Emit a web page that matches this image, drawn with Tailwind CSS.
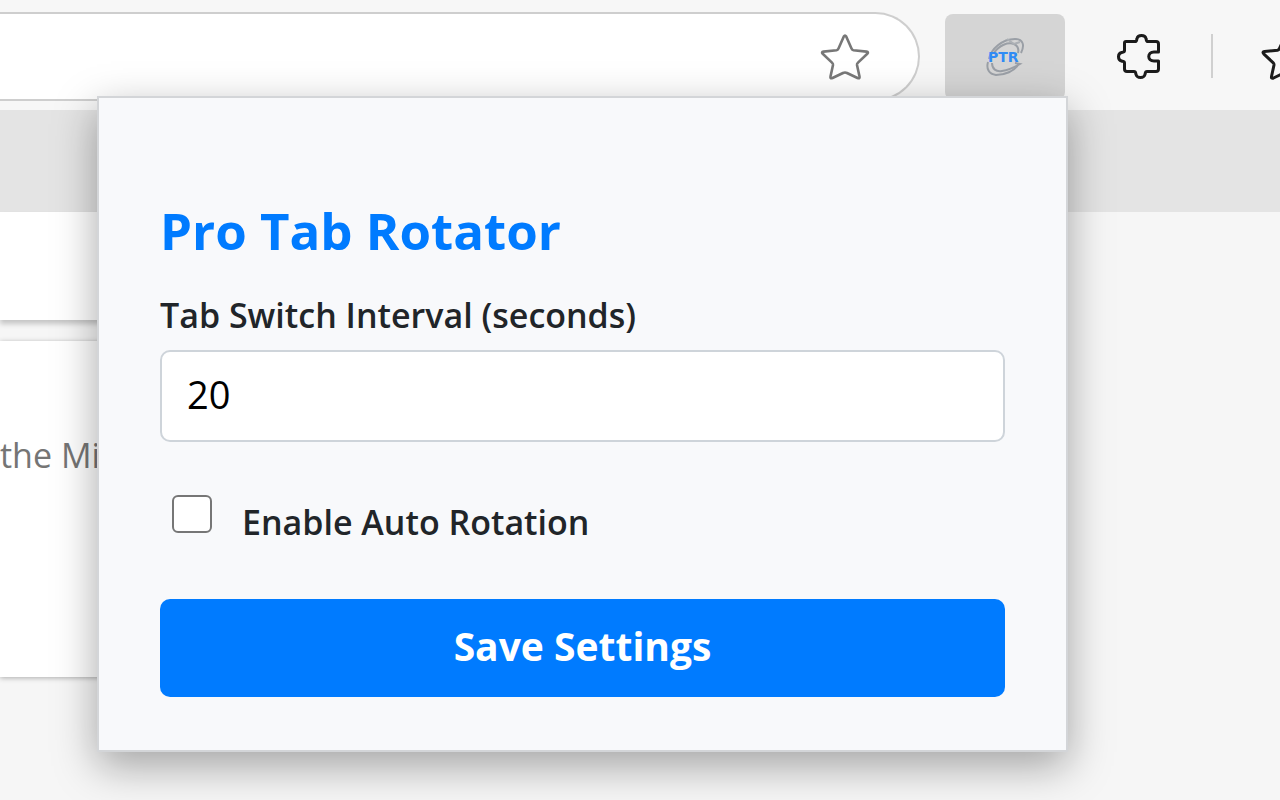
<!DOCTYPE html>
<html lang="en">
<head>
  <meta charset="UTF-8">
  <title>Pro Tab Rotator</title>
  <script src="https://cdn.jsdelivr.net/npm/@tailwindcss/browser@4"></script>
</head>
<body class="relative min-h-screen overflow-hidden bg-[#f6f6f6] font-['Open_Sans','Noto_Sans',sans-serif]">

  <!-- browser toolbar -->
  <header class="flex h-[110px] items-start bg-[#f7f7f7] pt-3">
    <div class="flex h-[89px] flex-1 items-center justify-end rounded-r-full border-2 border-l-0 border-[#cecece] bg-white pr-12">
      <button type="button" aria-label="Add to favorites">
        <svg class="size-[50px]" viewBox="0 0 50 50" fill="none" stroke="#777" stroke-width="2.6" stroke-linejoin="round">
          <path d="M23.800 4.500 Q25 2.500 26.200 4.500 L31.500 16.500 Q32.200 18 33.500 18.200 L46.500 19.600 Q49 20 47.300 21.800 L38 30.600 Q36.800 31.800 37 33 L39.500 44.500 Q40 47 37.500 46 L27 41 Q25 40 23 41 L12.500 46 Q10 47 10.500 44.500 L13 33 Q13.200 31.800 12 30.600 L2.700 21.800 Q1 20 3.500 19.600 L16.500 18.200 Q17.800 18 18.500 16.500 Z"/>
        </svg>
      </button>
    </div>
    <div class="flex w-[360px] shrink-0 items-start overflow-hidden pl-[25px]">
      <button type="button" aria-label="Pro Tab Rotator" class="mt-0.5 flex h-[86px] w-[120px] shrink-0 items-center justify-center rounded-lg bg-[#d5d5d5]">
        <svg class="size-11" viewBox="0 0 44 44" fill="none">
          <g stroke="#9a9fa6" stroke-width="2">
            <path d="M6 24 C8 14 19 4 32 4 C40 4 42 10 38 18"/>
            <path d="M11 18 C16 10 25 7 31 9 C35 11 36 14 35 18"/>
            <path d="M5 27 C3 34 6 39 13 40 C22 40 31 36 35 30"/>
            <path d="M9 28 C9 34 13 37 19 36 C26 35 32 32 37 29 L32 28"/>
            <path d="M24 4 L31 9 L37 7" stroke="#acb0b5"/>
          </g>
          <text x="5" y="27" font-family="DejaVu Sans, sans-serif" font-size="14" font-weight="700" fill="#2f8bf5">PTR</text>
        </svg>
      </button>
      <button type="button" aria-label="Extensions" class="mt-5 ml-[50px] shrink-0">
        <svg class="size-12" viewBox="0 0 48 48" fill="none" stroke="#1b1b1b" stroke-width="3" stroke-linejoin="round">
          <path d="M11 9.500 H20 C22 9.500 21.500 8 22 6.500 C23 2.500 30 2.500 31 6.500 C31.500 8 31 9.500 33 9.500 H41 Q43.500 9.500 43.500 12 V20 H39 C32 20 32 29 39 29 H43.500 V37 Q43.500 39.500 41 39.500 H32 C30 39.500 30.500 41 30 42.500 C29 46.500 22 46.500 21 42.500 C20.500 41 21 39.500 19 39.500 H12 Q9.500 39.500 9.500 37 V31 C9.500 29 8 29.500 6.500 29 C2.500 28 2.500 21.500 6.500 20.500 C8 20 9.500 20.500 9.500 18.500 V11 Q9.500 9.500 11 9.500 Z"/>
        </svg>
      </button>
      <div class="mt-[22px] ml-12 h-11 w-0.5 shrink-0 bg-[#d0d0d0]"></div>
      <button type="button" aria-label="Favorites" class="mt-5 ml-12 shrink-0">
        <svg class="size-[50px]" viewBox="0 0 50 50" fill="none" stroke="#1b1b1b" stroke-width="3" stroke-linejoin="round">
          <path d="M23.800 4.500 Q25 2.500 26.200 4.500 L31.500 16.500 L46.500 19.600 L38 30.600 L39.500 46 L25 40 L12.500 46 Q10 47 10.500 44.500 L13 33 Q13.200 31.800 12 30.600 L2.700 21.800 Q1 20 3.500 19.600 L16.500 18.200 Q17.800 18 18.500 16.500 Z"/>
        </svg>
      </button>
    </div>
  </header>

  <!-- page behind the popup -->
  <div class="h-[102px] bg-[#e4e4e4]"></div>
  <main class="w-1/2">
    <div class="h-[108px] bg-white shadow-[0_4px_5px_rgba(0,0,0,0.2)]"></div>
    <div class="mt-[21px] h-[336px] bg-white pt-[90px] shadow-[0_1px_5px_rgba(0,0,0,0.3)]">
      <p class="text-[34px] leading-12 text-[#757575]">the Microsoft</p>
    </div>
  </main>

  <!-- extension popup -->
  <form class="absolute top-24 right-[212px] left-[97px] flex flex-col border-2 border-[#d3d5d8] bg-[#f8f9fb] px-[61px] pt-24 pb-[53px] shadow-[0_14px_40px_rgba(0,0,0,0.34)]">
    <h1 class="text-[51px] leading-[72px] font-bold text-[#007bff]">Pro Tab Rotator</h1>
    <label for="interval" class="mt-[25px] text-[34px] leading-12 font-semibold text-[#212529]">Tab Switch Interval (seconds)</label>
    <input id="interval" type="text" inputmode="numeric" value="20" class="mt-[11px] h-[92px] w-full rounded-[10px] border-2 border-[#ced4da] bg-white px-[25px] pb-1 text-[38px] text-black">
    <div class="mt-[53px] flex items-start pl-3">
      <input id="rotation" type="checkbox" class="h-[38px] w-10 appearance-none rounded-md border-2 border-[#767676] bg-white checked:bg-[#007bff]">
      <label for="rotation" class="mt-[3px] ml-[30px] text-[34px] leading-12 font-semibold text-[#212529]">Enable Auto Rotation</label>
    </div>
    <button type="submit" class="mt-[53px] h-[98px] w-full rounded-[10px] bg-[#007bff] pb-1 text-[39px] font-bold text-white">Save Settings</button>
  </form>

</body>
</html>
